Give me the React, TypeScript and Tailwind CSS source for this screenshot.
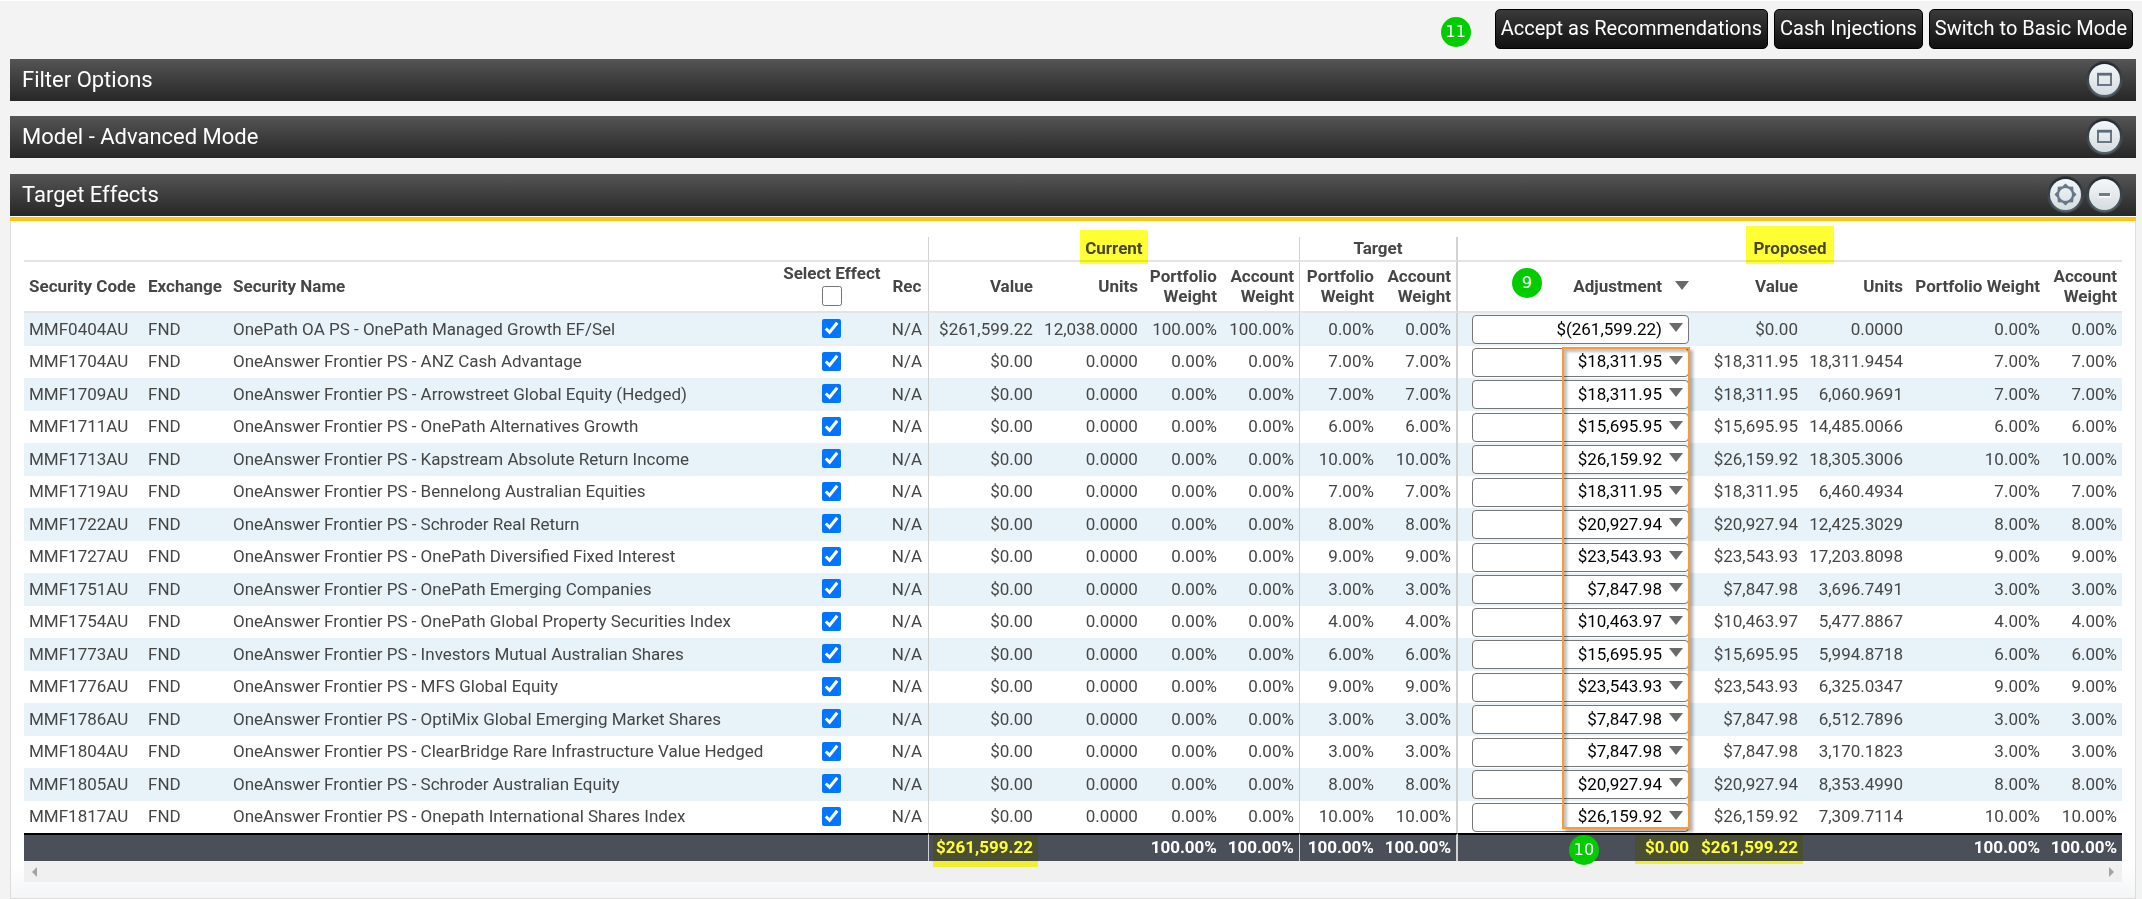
import { useState, type ReactNode } from "react";

const rows = [
  { code: "MMF0404AU", name: "OnePath OA PS - OnePath Managed Growth EF/Sel", value: "$261,599.22", units: "12,038.0000", weight: "100.00%", target: "0.00%", adjustment: "$(261,599.22)", newValue: "$0.00", newUnits: "0.0000" },
  { code: "MMF1704AU", name: "OneAnswer Frontier PS - ANZ Cash Advantage", value: "$0.00", units: "0.0000", weight: "0.00%", target: "7.00%", adjustment: "$18,311.95", newValue: "$18,311.95", newUnits: "18,311.9454" },
  { code: "MMF1709AU", name: "OneAnswer Frontier PS - Arrowstreet Global Equity (Hedged)", value: "$0.00", units: "0.0000", weight: "0.00%", target: "7.00%", adjustment: "$18,311.95", newValue: "$18,311.95", newUnits: "6,060.9691" },
  { code: "MMF1711AU", name: "OneAnswer Frontier PS - OnePath Alternatives Growth", value: "$0.00", units: "0.0000", weight: "0.00%", target: "6.00%", adjustment: "$15,695.95", newValue: "$15,695.95", newUnits: "14,485.0066" },
  { code: "MMF1713AU", name: "OneAnswer Frontier PS - Kapstream Absolute Return Income", value: "$0.00", units: "0.0000", weight: "0.00%", target: "10.00%", adjustment: "$26,159.92", newValue: "$26,159.92", newUnits: "18,305.3006" },
  { code: "MMF1719AU", name: "OneAnswer Frontier PS - Bennelong Australian Equities", value: "$0.00", units: "0.0000", weight: "0.00%", target: "7.00%", adjustment: "$18,311.95", newValue: "$18,311.95", newUnits: "6,460.4934" },
  { code: "MMF1722AU", name: "OneAnswer Frontier PS - Schroder Real Return", value: "$0.00", units: "0.0000", weight: "0.00%", target: "8.00%", adjustment: "$20,927.94", newValue: "$20,927.94", newUnits: "12,425.3029" },
  { code: "MMF1727AU", name: "OneAnswer Frontier PS - OnePath Diversified Fixed Interest", value: "$0.00", units: "0.0000", weight: "0.00%", target: "9.00%", adjustment: "$23,543.93", newValue: "$23,543.93", newUnits: "17,203.8098" },
  { code: "MMF1751AU", name: "OneAnswer Frontier PS - OnePath Emerging Companies", value: "$0.00", units: "0.0000", weight: "0.00%", target: "3.00%", adjustment: "$7,847.98", newValue: "$7,847.98", newUnits: "3,696.7491" },
  { code: "MMF1754AU", name: "OneAnswer Frontier PS - OnePath Global Property Securities Index", value: "$0.00", units: "0.0000", weight: "0.00%", target: "4.00%", adjustment: "$10,463.97", newValue: "$10,463.97", newUnits: "5,477.8867" },
  { code: "MMF1773AU", name: "OneAnswer Frontier PS - Investors Mutual Australian Shares", value: "$0.00", units: "0.0000", weight: "0.00%", target: "6.00%", adjustment: "$15,695.95", newValue: "$15,695.95", newUnits: "5,994.8718" },
  { code: "MMF1776AU", name: "OneAnswer Frontier PS - MFS Global Equity", value: "$0.00", units: "0.0000", weight: "0.00%", target: "9.00%", adjustment: "$23,543.93", newValue: "$23,543.93", newUnits: "6,325.0347" },
  { code: "MMF1786AU", name: "OneAnswer Frontier PS - OptiMix Global Emerging Market Shares", value: "$0.00", units: "0.0000", weight: "0.00%", target: "3.00%", adjustment: "$7,847.98", newValue: "$7,847.98", newUnits: "6,512.7896" },
  { code: "MMF1804AU", name: "OneAnswer Frontier PS - ClearBridge Rare Infrastructure Value Hedged", value: "$0.00", units: "0.0000", weight: "0.00%", target: "3.00%", adjustment: "$7,847.98", newValue: "$7,847.98", newUnits: "3,170.1823" },
  { code: "MMF1805AU", name: "OneAnswer Frontier PS - Schroder Australian Equity", value: "$0.00", units: "0.0000", weight: "0.00%", target: "8.00%", adjustment: "$20,927.94", newValue: "$20,927.94", newUnits: "8,353.4990" },
  { code: "MMF1817AU", name: "OneAnswer Frontier PS - Onepath International Shares Index", value: "$0.00", units: "0.0000", weight: "0.00%", target: "10.00%", adjustment: "$26,159.92", newValue: "$26,159.92", newUnits: "7,309.7114" },
];

const actions = ["Accept as Recommendations", "Cash Injections", "Switch to Basic Mode"];

const Arrow = ({ className = "" }: { className?: string }) => (
  <svg viewBox="0 0 14 9" className={`w-3.5 h-[9px] ${className}`} aria-hidden="true">
    <path d="M0 0h14L7 9z" fill="#6a6a6a" />
  </svg>
);

const Step = ({ n, className = "" }: { n: number; className?: string }) => (
  <span className={`flex size-[30px] items-center justify-center rounded-full bg-[#00cc00] text-base font-normal text-white font-['DejaVu_Sans',sans-serif] ${className}`}>
    {n}
  </span>
);

const RoundButton = ({ kind, label }: { kind: "window" | "minus" | "gear"; label: string }) => (
  <button type="button" aria-label={label} className="block size-[39px]">
    <svg viewBox="0 0 39 39" className="size-full">
      <defs>
        <linearGradient id={`face-${kind}`} x1="0" y1="0" x2="0" y2="1">
          <stop offset="0" stopColor="#f4f7f9" />
          <stop offset="1" stopColor="#d5dce0" />
        </linearGradient>
        <linearGradient id={`rim-${kind}`} x1="0" y1="0" x2="0" y2="1">
          <stop offset="0" stopColor="#20262c" />
          <stop offset="1" stopColor="#55656f" />
        </linearGradient>
      </defs>
      <circle cx="19.5" cy="19.5" r="18.5" fill={`url(#rim-${kind})`} opacity="0.6" />
      <circle cx="19.5" cy="19.5" r="17.2" fill={`url(#rim-${kind})`} />
      <circle cx="19.5" cy="19.5" r="15.5" fill={`url(#face-${kind})`} />
      {kind === "window" && (
        <g stroke="#5c6c7b">
          <rect x="13" y="14" width="13" height="11" fill="none" strokeWidth="1.8" />
          <path d="M12.1 14.2h14.8" strokeWidth="2.8" />
        </g>
      )}
      {kind === "minus" && (
        <g>
          <path d="M14 20.5h12" stroke="#fff" strokeWidth="4" />
          <path d="M14 19.5h11" stroke="#6c7e8e" strokeWidth="3" />
        </g>
      )}
      {kind === "gear" && (
        <path
          fill="#66788a"
          fillRule="evenodd"
          d="M30.5 19.5L27.5 22.8 27.2 27.2 22.8 27.5 19.5 30.5 16.2 27.5 11.8 27.2 11.5 22.8 8.5 19.5 11.5 16.2 11.8 11.8 16.2 11.5 19.5 8.5 22.8 11.5 27.2 11.8 27.5 16.2zM26 19.5a6.5 6.5 0 1 0-13 0 6.5 6.5 0 1 0 13 0z"
        />
      )}
    </svg>
  </button>
);

const Bar = ({ title, children }: { title: string; children: ReactNode }) => (
  <div className="flex h-[42px] items-center justify-between bg-linear-to-b from-[#555] to-[#272727] px-3">
    <h2 className="text-[22px] leading-7 text-white">{title}</h2>
    <div className="flex pb-px">{children}</div>
  </div>
);

const App = () => {
  const [checked, setChecked] = useState(rows.map(() => true));
  const [master, setMaster] = useState(false);

  const toggle = (index: number) => setChecked(checked.map((c, i) => (i === index ? !c : c)));

  const toggleAll = () => {
    setMaster(!master);
    setChecked(rows.map(() => !master));
  };

  return (
    <main className="border-t border-white bg-[#f3f3f3] pl-2.5 pr-1.5 font-[Roboto,sans-serif] text-[17px] text-[#464646]">
      {/* Actions */}
      <div className="flex h-[58px] items-start justify-end gap-1.5 pt-2 pr-[3px]">
        <Step n={11} className="mt-2 mr-[18px]" />
        {actions.map((label) => (
          <button
            key={label}
            type="button"
            className="h-10 rounded-[5px] border border-black bg-linear-to-b from-[#3a3a3a] to-[#111] px-[5px] pb-0.5 text-xl text-white"
          >
            {label}
          </button>
        ))}
      </div>

      <section className="mb-[15px]">
        <Bar title="Filter Options">
          <RoundButton kind="window" label="Expand Filter Options" />
        </Bar>
      </section>
      <section className="mb-4">
        <Bar title="Model - Advanced Mode">
          <RoundButton kind="window" label="Expand Model" />
        </Bar>
      </section>

      {/* Target effects */}
      <section>
        <Bar title="Target Effects">
          <RoundButton kind="gear" label="Settings" />
          <RoundButton kind="minus" label="Collapse Target Effects" />
        </Bar>
        <div className="h-[5px] border-t border-b-4 border-t-white border-b-[#ffc40f]" />
        <div className="border border-t-0 border-[#dcdcdc] bg-linear-to-b from-white from-95% to-[#f4f5f6] px-[13px] pt-4 pb-4">
          <table className="w-full table-fixed border-separate border-spacing-0 [&_td]:px-[5px] [&_td]:pt-0 [&_td]:pb-0.5 [&_th]:px-[5px] [&_th]:pt-0 [&_th]:pb-0.5">
            <colgroup>
              <col className="w-[119px]" />
              <col className="w-[85px]" />
              <col />
              <col className="w-[108px]" />
              <col className="w-[43px]" />
              <col className="w-[109px]" />
              <col className="w-[105px]" />
              <col className="w-[79px]" />
              <col className="w-[78px]" />
              <col className="w-[79px]" />
              <col className="w-[79px]" />
              <col className="w-[236px]" />
              <col className="w-[109px]" />
              <col className="w-[105px]" />
              <col className="w-[137px]" />
              <col className="w-[77px]" />
            </colgroup>
            <thead className="leading-5">
              <tr className="h-[25px] [&>*]:border-b-2 [&>*]:border-b-[#e4e4e4]">
                <td colSpan={5} className="border-r border-r-[#d2d2d2]" />
                <th colSpan={4} className="border-r border-r-[#d2d2d2]">
                  <span className="relative">
                    Current
                    <span className="absolute -inset-x-[5px] -top-2 -bottom-1.5 bg-[#ffff33] mix-blend-darken" />
                  </span>
                </th>
                <th colSpan={2} className="border-r-2 border-r-[#d2d2d2]">Target</th>
                <th colSpan={5}>
                  <span className="relative">
                    Proposed
                    <span className="absolute -inset-x-[7px] -top-3 -bottom-1.5 bg-[#ffff33] mix-blend-darken" />
                  </span>
                </th>
              </tr>
              <tr className="h-[51px] text-right [&>*]:border-b-2 [&>*]:border-b-[#e4e4e4]">
                <th className="text-left">Security Code</th>
                <th className="text-left">Exchange</th>
                <th className="text-left">Security Name</th>
                <th>
                  <label className="flex flex-col items-center gap-[3px] pb-0.5 whitespace-nowrap">
                    Select Effect
                    <input type="checkbox" className="size-5" checked={master} onChange={toggleAll} />
                  </label>
                </th>
                <th className="border-r border-r-[#d2d2d2] text-center">Rec</th>
                <th>Value</th>
                <th>Units</th>
                <th>Portfolio Weight</th>
                <th className="border-r border-r-[#d2d2d2]">Account Weight</th>
                <th>Portfolio Weight</th>
                <th className="border-r-2 border-r-[#d2d2d2]">Account Weight</th>
                <th className="relative">
                  <Step n={9} className="absolute left-[54px] top-[6px]" />
                  <span className="flex items-center justify-end gap-[13px]">
                    Adjustment
                    <Arrow />
                  </span>
                </th>
                <th>Value</th>
                <th>Units</th>
                <th className="whitespace-nowrap">Portfolio Weight</th>
                <th>Account Weight</th>
              </tr>
            </thead>
            <tbody className="text-right leading-6 whitespace-nowrap">
              {rows.map((row, index) => (
                <tr key={row.code} className="h-8 odd:h-[33px] odd:bg-[#e7f3f8]">
                  <td className="text-left">{row.code}</td>
                  <td className="text-left">FND</td>
                  <td className="text-left">{row.name}</td>
                  <td>
                    <input
                      type="checkbox"
                      aria-label={`Select ${row.code}`}
                      className="mx-auto block size-[19px] accent-[#0075ff]"
                      checked={checked[index]}
                      onChange={() => toggle(index)}
                    />
                  </td>
                  <td className="border-r border-[#d2d2d2] text-center">N/A</td>
                  <td>{row.value}</td>
                  <td>{row.units}</td>
                  <td>{row.weight}</td>
                  <td className="border-r border-[#d2d2d2]">{row.weight}</td>
                  <td>{row.target}</td>
                  <td className="border-r-2 border-[#d2d2d2]">{row.target}</td>
                  <td className="pb-0!">
                    <div className="relative ml-[9px]">
                      <input
                        type="text"
                        aria-label={`Adjustment for ${row.code}`}
                        defaultValue={row.adjustment}
                        className="block h-[29px] w-full rounded-[4px] border border-[#767676] bg-white pr-[26px] pb-0.5 text-right text-black"
                      />
                      <Arrow className="absolute right-1.5 top-2" />
                      {/* Callout frame, drawn once from the second row down to the last */}
                      {index === 1 && (
                        <div className="pointer-events-none absolute -right-px -top-px z-10 h-[482px] w-[128px] border-2 border-[#ff9933] shadow-[3px_3px_3px_rgba(0,0,0,0.3),inset_3px_3px_3px_rgba(0,0,0,0.25)]" />
                      )}
                    </div>
                  </td>
                  <td>{row.newValue}</td>
                  <td>{row.newUnits}</td>
                  <td>{row.target}</td>
                  <td>{row.target}</td>
                </tr>
              ))}
            </tbody>
            <tfoot className="text-right leading-6 font-bold text-white">
              <tr className="h-7 bg-[#4a4f59] [&>td]:border-t-2 [&>td]:border-t-black">
                <td colSpan={5} className="border-r border-r-[#d2d2d2]" />
                <td className="relative">
                  $261,599.22
                  <span className="absolute left-1 right-0 top-0 h-8 bg-[#ffff33] mix-blend-darken" />
                </td>
                <td />
                <td>100.00%</td>
                <td className="border-r border-r-[#d2d2d2]">100.00%</td>
                <td>100.00%</td>
                <td className="border-r-2 border-r-[#d2d2d2]">100.00%</td>
                <td className="relative">
                  <Step n={10} className="absolute left-[111px] top-0" />
                  $0.00
                  <span className="absolute right-0 top-0 h-[29px] w-[59px] bg-[#ffff33] mix-blend-darken" />
                </td>
                <td className="relative">
                  $261,599.22
                  <span className="absolute inset-x-0 top-0 h-[29px] bg-[#ffff33] mix-blend-darken" />
                </td>
                <td />
                <td>100.00%</td>
                <td>100.00%</td>
              </tr>
            </tfoot>
          </table>
          <div className="flex h-[21px] items-center justify-between bg-[#f0f0f0] px-2">
            <svg viewBox="0 0 5 10" className="h-2.5 w-[5px]"><path d="M5 0v10L0 5z" fill="#a3a3a3" /></svg>
            <svg viewBox="0 0 5 10" className="h-2.5 w-[5px]"><path d="M0 0v10l5-5z" fill="#a3a3a3" /></svg>
          </div>
        </div>
      </section>
    </main>
  );
};

export default App;
